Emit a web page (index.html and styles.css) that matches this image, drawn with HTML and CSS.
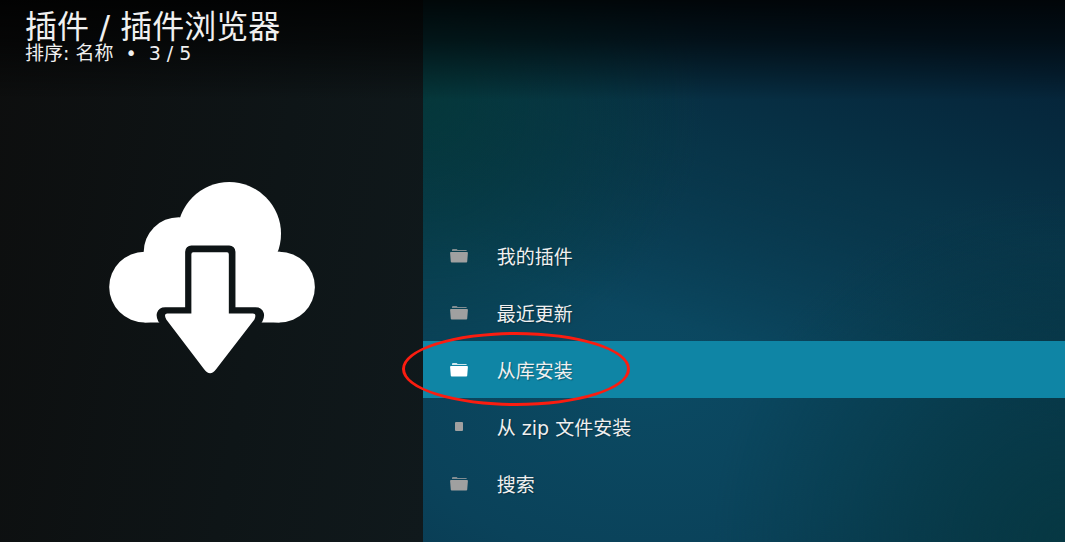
FILE: index.html
```
<!DOCTYPE html>
<html lang="zh-CN">
<head>
    <meta charset="UTF-8">
    <meta name="viewport" content="width=device-width, initial-scale=1.0">
    <title>插件浏览器</title>
    <link rel="stylesheet" href="styles.css">
</head>
<body>
    <svg class="symbols" aria-hidden="true">
        <symbol id="folder" viewBox="0 0 18 14">
            <path d="M2 1.4V1Q2 0 3 0H6.400Q7.400 0 7.400 1H16Q16.800 1 16.800 2H2z" opacity=".8"/>
            <path d="M1 3H17Q18 3 17.900 4L17.200 12.800Q17.100 13.600 16.300 13.600H1.700Q.9 13.600.8 12.800L.1 4Q0 3 1 3z"/>
        </symbol>
        <symbol id="file" viewBox="0 0 18 14">
            <rect x="5" y="2" width="8" height="9" rx="1"/>
        </symbol>
    </svg>
    <div class="screen">
        <header class="header">
            <h1>插件 / 插件浏览器</h1>
            <p class="status">
                <span>排序: 名称</span>
                <span>•</span>
                <span>3 / 5</span>
            </p>
        </header>
        <aside class="preview">
            <svg class="cloud" viewBox="109 182 207 193" aria-hidden="true">
                <mask id="cutout" maskUnits="userSpaceOnUse" x="100" y="175" width="225" height="205">
                    <rect x="100" y="175" width="225" height="205" fill="#fff"/>
                    <path d="M191.700 252H229.700V314H256Q260 314 257.500 319L215 371Q210.500 376 206 371L164 319Q161.500 314 165.500 314H191.700z" fill="#000" stroke="#000" stroke-width="12.500" stroke-linejoin="round"/>
                </mask>
                <g mask="url(#cutout)" fill="#fff">
                    <circle cx="229.700" cy="234" r="52"/>
                    <circle cx="179" cy="252.500" r="35.200"/>
                    <circle cx="144.700" cy="287.500" r="35.500"/>
                    <circle cx="280.200" cy="287.500" r="35.500"/>
                    <path d="M144.700 252H280.200V323H144.700z"/>
                </g>
                <path d="M193.500 252.500H227.500Q229.300 252.500 229.300 254.500V314H253.500Q257.500 314 255 320L216.500 370Q210.500 378 204.500 370L166.500 320Q163.500 314 167.500 314H191.700V254.500Q191.700 252.500 193.500 252.500z" fill="#fff"/>
            </svg>
        </aside>
        <main class="content">
            <ul class="menu">
                <li><a href="#" class="item"><svg class="icon"><use href="#folder"/></svg>我的插件</a></li>
                <li><a href="#" class="item"><svg class="icon"><use href="#folder"/></svg>最近更新</a></li>
                <li><a href="#" class="item selected"><svg class="icon"><use href="#folder"/></svg>从库安装<span class="ring"></span></a></li>
                <li><a href="#" class="item"><svg class="icon"><use href="#file"/></svg>从 zip 文件安装</a></li>
                <li><a href="#" class="item"><svg class="icon"><use href="#folder"/></svg>搜索</a></li>
            </ul>
        </main>
    </div>
</body>
</html>
```
FILE: styles.css
```
* {
    box-sizing: border-box;
}
body {
    margin: 0;
    background: #0d1214;
    color: #f0f0f0;
    font-family: "DejaVu Sans", "Noto Sans CJK SC", sans-serif;
    font-size: 19px;
}
.symbols {
    display: none;
}
.screen {
    position: relative;
    display: flex;
    min-height: 100vh;
}
/* title floats over both panels and shades their top edge */
.header {
    position: absolute;
    top: 0;
    left: 0;
    right: 0;
    z-index: 1;
    height: 100px;
    padding: 8px 25px;
    background: linear-gradient(rgba(0, 0, 0, 0.85), rgba(0, 0, 0, 0.6) 40%, transparent);
}
h1 {
    margin: 0;
    font-size: 32px;
    font-weight: normal;
    line-height: 38px;
}
.status {
    display: flex;
    gap: 12px;
    margin: 0;
    line-height: 14px;
}
.preview {
    display: flex;
    flex: 0 0 39.7%;
    align-items: center;
    justify-content: center;
    padding: 14px 0 0 2px;
    background: linear-gradient(100deg, #0d0e0e, #0e1517 60%, #10191c);
}
.cloud {
    width: 49%;
}
.content {
    display: flex;
    flex: 1;
    flex-direction: column;
    justify-content: flex-end;
    min-width: 0;
    padding-bottom: 30px;
    background:
        radial-gradient(circle at 0 18%, rgba(3, 56, 52, 0.7), transparent 36%),
        radial-gradient(circle at 100% 100%, rgba(6, 56, 66, 0.9), transparent 42%),
        linear-gradient(195deg, #052338 10%, #083549 35%, rgba(8, 53, 73, 0) 60%),
        radial-gradient(ellipse 90% 75% at 35% 70%, #0b4a63, #0a425a 45%, #072f45 100%);
}
.menu {
    margin: 0;
    padding: 0;
    list-style: none;
}
.item {
    position: relative;
    display: flex;
    align-items: center;
    gap: 29px;
    height: 57px;
    padding: 0 27px;
    color: inherit;
    text-decoration: none;
    text-shadow: 1px 1px 1px rgba(0, 0, 0, 0.3);
}
.icon {
    width: 18px;
    height: 14px;
    fill: #a0a0a0;
}
.selected {
    background: #0f85a5;
}
.selected .icon {
    fill: #fff;
}
.ring {
    position: absolute;
    top: -9px;
    left: -21px;
    width: 228px;
    height: 74px;
    border: 3px solid #fb1d10;
    border-radius: 50%;
}
```
